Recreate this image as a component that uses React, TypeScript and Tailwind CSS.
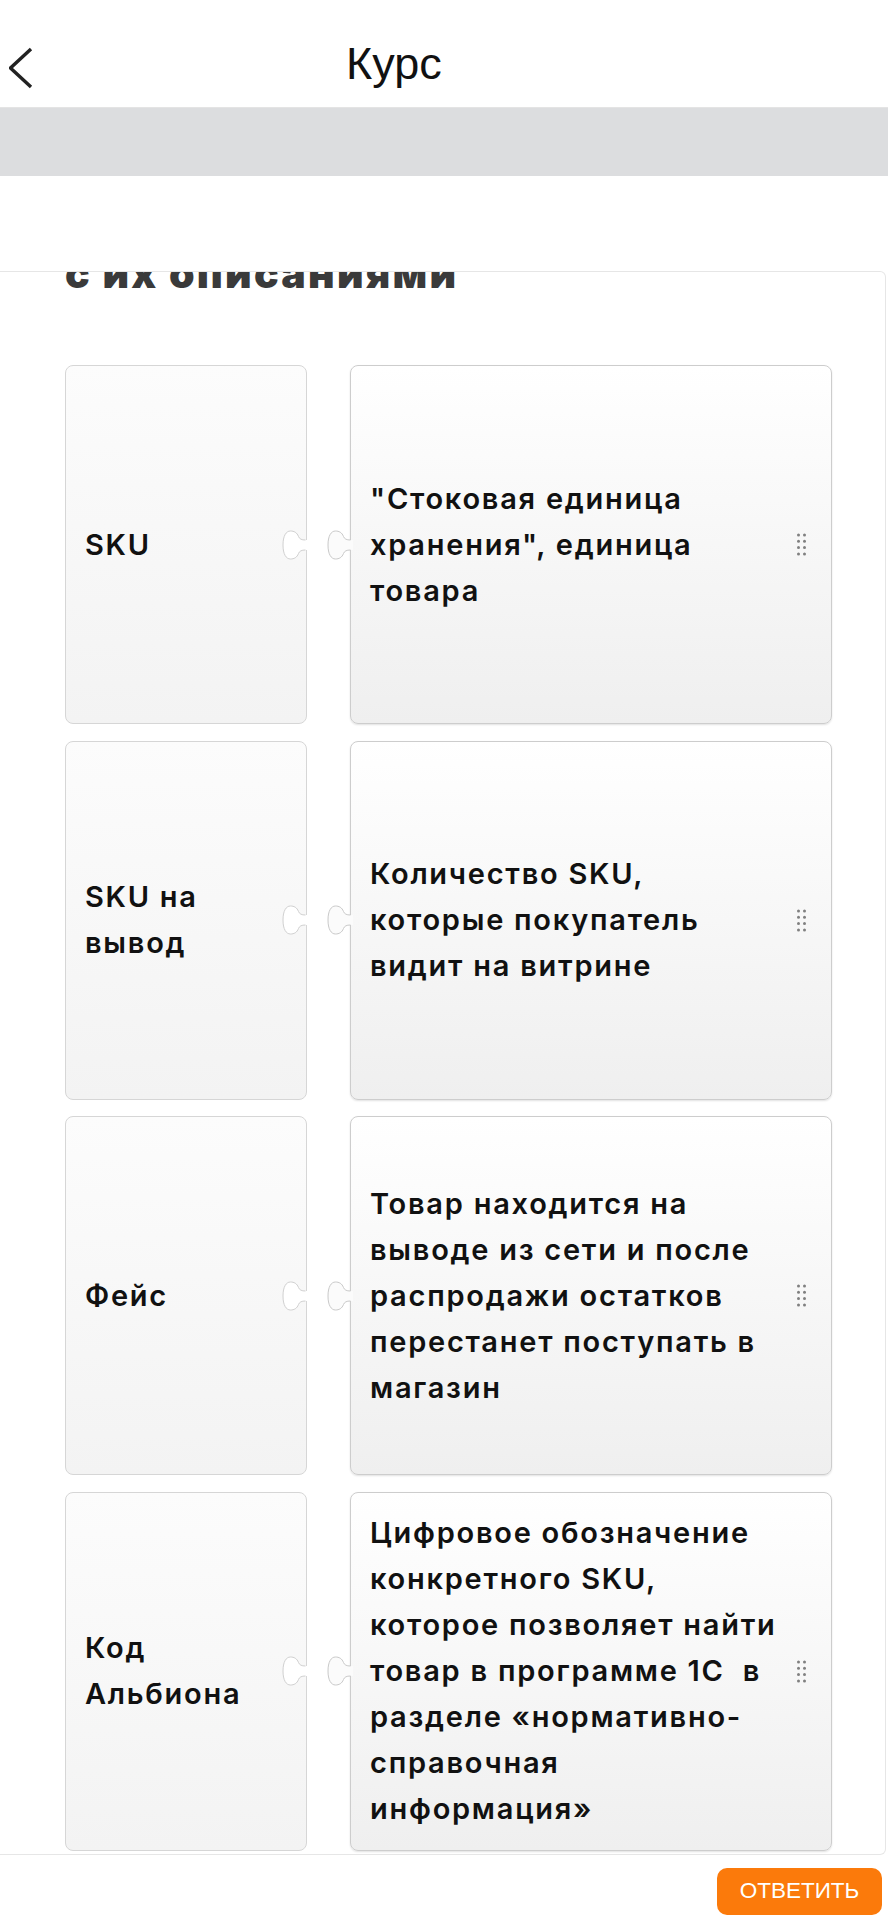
const ROWS = [
  { term: ['SKU'], desc: ['"Стоковая единица', 'хранения", единица', 'товара'] },
  { term: ['SKU на', 'вывод'], desc: ['Количество SKU,', 'которые покупатель', 'видит на витрине'] },
  {
    term: ['Фейс'],
    desc: ['Товар находится на', 'выводе из сети и после', 'распродажи остатков', 'перестанет поступать в', 'магазин'],
  },
  {
    term: ['Код', 'Альбиона'],
    desc: [
      'Цифровое обозначение',
      'конкретного SKU,',
      'которое позволяет найти',
      'товар в программе 1С  в',
      'разделе «нормативно-',
      'справочная',
      'информация»',
    ],
  },
]

const KNOB = 'M26 11 L24 11 C20.5 11 18.5 10 17.5 7.5 C16 3.5 13 2 9.5 2 C5 2 2 7 2 16 C2 25 5 30 9.5 30 C13 30 16 28.5 17.5 24.5 C18.5 22 20.5 21 24 21 L26 21'
const KNOB_LINE = 'M24.5 11 C20.5 11 18.5 10 17.5 7.5 C16 3.5 13 2 9.5 2 C5 2 2 7 2 16 C2 25 5 30 9.5 30 C13 30 16 28.5 17.5 24.5 C18.5 22 20.5 21 24.5 21'

function Socket() {
  // cut into the right edge of the term card
  return (
    <svg width="26" height="32" viewBox="0 0 26 32" className="absolute right-[-1px] top-1/2 -translate-y-1/2">
      <path d={KNOB + ' Z'} fill="#ffffff" />
      <path d={KNOB_LINE} fill="none" stroke="#d0d0d0" strokeWidth="1" />
    </svg>
  )
}

function Tab() {
  // sticks out of the left edge of the description card
  return (
    <svg width="27" height="32" viewBox="0 0 27 32" className="absolute left-[-25px] top-1/2 -translate-y-1/2">
      <path d={KNOB + ' L27 21 L27 11 Z'} fill="#fbfbfb" />
      <path d={KNOB_LINE} fill="none" stroke="#c9c9c9" strokeWidth="1" />
    </svg>
  )
}

function Grip() {
  const xs = [1.5, 7.5]
  const ys = [2, 8.3, 14.6, 20.9]
  return (
    <svg width="9" height="23" viewBox="0 0 9 23" className="shrink-0">
      {ys.map((y) => xs.map((x) => <circle key={`${x}-${y}`} cx={x} cy={y} r="1.5" fill="#808080" />))}
    </svg>
  )
}

export default function App() {
  return (
    <div className="w-[888px] min-h-[1920px] bg-white font-['Inter',sans-serif] text-[#111]">
      <header className="h-[108px] border-b border-[#e4e4e4] flex items-start">
        <svg width="26" height="42" viewBox="0 0 26 42" className="ml-[9px] mt-[47px]">
          <polyline points="22,2 1.5,21 22,40" fill="none" stroke="#222" strokeWidth="3.4" />
        </svg>
        <h1 className="ml-[311px] pt-[42px] text-[45px] leading-[44px] font-['Liberation_Sans',Arial,sans-serif] font-normal text-[#111]">
          Курс
        </h1>
      </header>

      <div className="h-[68px] bg-[#dcdddf]" />
      <div className="h-[95px] bg-white" />

      <section className="w-[886px] border-y border-r border-[#e6e6e6] rounded-r-[6px] overflow-hidden pl-[65px] pr-[53px] pb-[3px]">
        <h2 className="-mt-[20px] text-[41px] leading-[42px] font-black text-[#3a3a3a] tracking-[0.055em]">
          с их описаниями
        </h2>

        <div className="mt-[71px] flex flex-col gap-[16.5px]">
          {ROWS.map((row) => (
            <div key={row.term.join(' ')} className="flex gap-[43px] h-[359px]">
              <div className="relative w-[242px] rounded-[8px] border border-[#d6d6d6] bg-gradient-to-b from-[#fcfcfc] to-[#f3f3f3] flex items-center pl-[19px]">
                <p className="text-[29px] leading-[46px] font-semibold tracking-[0.06em]">
                  {row.term.map((l) => (
                    <span key={l} className="block">
                      {l}
                    </span>
                  ))}
                </p>
                <Socket />
              </div>
              <div className="relative w-[482px] rounded-[8px] border border-[#cdcdcd] bg-gradient-to-b from-white to-[#efefef] shadow-[0_1px_2px_rgba(0,0,0,0.12)] flex items-center pl-[19px] pr-[25px]">
                <p className="flex-1 text-[29px] leading-[46px] font-semibold tracking-[0.06em] whitespace-pre">
                  {row.desc.map((l) => (
                    <span key={l} className="block">
                      {l}
                    </span>
                  ))}
                </p>
                <Grip />
                <Tab />
              </div>
            </div>
          ))}
        </div>
      </section>

      <div className="flex justify-end pr-[6px] mt-[13px]">
        <button className="w-[165px] h-[47px] rounded-[10px] bg-[#fb7a0b] text-white text-[22.5px] font-['Liberation_Sans',Arial,sans-serif] uppercase">
          Ответить
        </button>
      </div>
    </div>
  )
}
